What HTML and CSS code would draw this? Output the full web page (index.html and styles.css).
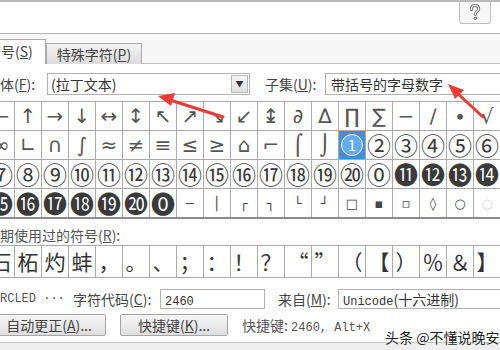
FILE: index.html
```html
<!DOCTYPE html>
<html lang="zh-CN">
<head>
<meta charset="utf-8"/>
<title>符号</title>
<link rel="stylesheet" href="styles.css">
</head>
<body>
<div class="dialog">
  <div class="titlebar">
    <div class="help-btn">
      <svg width="14" height="17" viewBox="0 0 14 17"><path d="M3.4 5.4 C3.4 2.8 5 1.5 7 1.5 C9.2 1.5 10.7 2.8 10.7 4.8 C10.7 6.5 9.5 7.2 8.5 7.9 C7.7 8.5 7.3 9 7.3 10.6" fill="none" stroke="#7a7a7a" stroke-width="3" stroke-linecap="round"/><path d="M3.4 5.4 C3.4 2.8 5 1.5 7 1.5 C9.2 1.5 10.7 2.8 10.7 4.8 C10.7 6.5 9.5 7.2 8.5 7.9 C7.7 8.5 7.3 9 7.3 10.6" fill="none" stroke="#f4f4f4" stroke-width="1.1" stroke-linecap="round"/><circle cx="7.3" cy="14.2" r="1.8" fill="#7a7a7a"/><circle cx="7.3" cy="14.2" r="0.7" fill="#f4f4f4"/></svg>
    </div>
  </div>

  <div class="tabs">
    <div class="tab active">符号(<u>S</u>)</div>
    <div class="tab">特殊字符(<u>P</u>)</div>
  </div>

  <div class="panel">
    <div class="font-row">
      <span class="label font-label">字体(<u>F</u>):</span>
      <div class="field font-field">(拉丁文本)<span class="drop">▼</span></div>
      <span class="label subset-label">子集(<u>U</u>):</span>
      <div class="field subset-field">带括号的字母数字</div>
    </div>

    <div class="grid">
      <div class="cell">←</div><div class="cell">↑</div><div class="cell">→</div><div class="cell">↓</div><div class="cell">↔</div><div class="cell">↕</div><div class="cell">↖</div><div class="cell">↗</div><div class="cell">↘</div><div class="cell">↙</div><div class="cell">↨</div><div class="cell">∂</div><div class="cell">∆</div><div class="cell">∏</div><div class="cell">∑</div><div class="cell">−</div><div class="cell">∕</div><div class="cell">∙</div><div class="cell">√</div>
      <div class="cell">∞</div><div class="cell">∟</div><div class="cell">∩</div><div class="cell">∫</div><div class="cell">≈</div><div class="cell">≠</div><div class="cell">≡</div><div class="cell">≤</div><div class="cell">≥</div><div class="cell">⌂</div><div class="cell">⌐</div><div class="cell">⌠</div><div class="cell">⌡</div><div class="cell sel"><span class="sel-circle">1</span></div><div class="cell circ">②</div><div class="cell circ">③</div><div class="cell circ">④</div><div class="cell circ">⑤</div><div class="cell circ">⑥</div>
      <div class="cell circ">⑦</div><div class="cell circ">⑧</div><div class="cell circ">⑨</div><div class="cell circ">⑩</div><div class="cell circ">⑪</div><div class="cell circ">⑫</div><div class="cell circ">⑬</div><div class="cell circ">⑭</div><div class="cell circ">⑮</div><div class="cell circ">⑯</div><div class="cell circ">⑰</div><div class="cell circ">⑱</div><div class="cell circ">⑲</div><div class="cell circ">⑳</div><div class="cell circ">⓪</div><div class="cell circ">⓫</div><div class="cell circ">⓬</div><div class="cell circ">⓭</div><div class="cell circ">⓮</div>
      <div class="cell circ">⓯</div><div class="cell circ">⓰</div><div class="cell circ">⓱</div><div class="cell circ">⓲</div><div class="cell circ">⓳</div><div class="cell circ">⓴</div><div class="cell circ">⓿</div><div class="cell small">─</div><div class="cell small">│</div><div class="cell small">┌</div><div class="cell small">┐</div><div class="cell small">└</div><div class="cell small">┘</div><div class="cell small">□</div><div class="cell small">▪</div><div class="cell small">▫</div><div class="cell small">◊</div><div class="cell small">○</div><div class="cell small faint">○</div>
    </div>

    <div class="recent-label">近期使用过的符号(<u>R</u>):</div>
    <div class="recent">
      <div class="cell">石</div><div class="cell">柘</div><div class="cell">灼</div><div class="cell">蚌</div><div class="cell">，</div><div class="cell">。</div><div class="cell">、</div><div class="cell">；</div><div class="cell">：</div><div class="cell">！</div><div class="cell">？</div><div class="cell">“</div><div class="cell">”</div><div class="cell">（</div><div class="cell">【</div><div class="cell">）</div><div class="cell">％</div><div class="cell">＆</div><div class="cell">】</div>
    </div>

    <div class="code-row">
      <span class="mono name">RCLED ···</span>
      <span class="label code-label">字符代码(<u>C</u>):</span>
      <div class="field code-field"><span class="mono">2460</span></div>
      <span class="label from-label">来自(<u>M</u>):</span>
      <div class="field from-field"><span class="mono">Unicode</span>(十六进制)</div>
    </div>

    <div class="btn-row">
      <div class="btn btn-auto">自动更正(<u>A</u>)...</div>
      <div class="btn btn-key">快捷键(<u>K</u>)...</div>
      <span class="label shortcut">快捷键: <span class="mono">2460, Alt+X</span></span>
    </div>
  </div>

  <div class="bottom"></div>

  <!-- red annotation arrows -->
  <svg class="arrows" width="500" height="350" viewBox="0 0 500 350">
    <line x1="223" y1="117" x2="170" y2="100" stroke="#ee3b36" stroke-width="3" stroke-linecap="round"/>
    <polygon points="158,96 175,93 171,106" fill="#ee3b36"/>
    <line x1="483" y1="117" x2="456" y2="92" stroke="#ee3b36" stroke-width="3" stroke-linecap="round"/>
    <polygon points="448,84 464,90 455,99" fill="#ee3b36"/>
  </svg>

  <div class="watermark">头条 @不懂说晚安</div>
</div>
</body>
</html>
```
FILE: styles.css
```css
* {
    margin: 0;
    padding: 0;
    box-sizing: border-box;
}

body {
    width: 500px;
    height: 350px;
    overflow: hidden;
    background: #fff;
    font-family: "Noto Sans CJK SC", sans-serif;
    font-size: 14px;
    color: #444;
}

u {
    text-decoration: underline;
    text-underline-offset: 1px;
}

.mono {
    font-family: "Liberation Mono", monospace;
    font-size: 12px;
}

.dialog {
    position: relative;
    height: 350px;
    border-top: 2px solid #b9b9b9;
    overflow: hidden;
}

.titlebar {
    height: 32px;
    border-bottom: 1px solid #b4b4b4;
    display: flex;
    justify-content: flex-end;
}

.help-btn {
    width: 32px;
    height: 22px;
    margin-right: 9px;
    border: 1px solid #bdbdbd;
    border-top: none;
    border-radius: 0 0 4px 4px;
    background: #f6f6f6;
    display: flex;
    align-items: center;
    justify-content: center;
}

.tabs {
    height: 30px;
    display: flex;
    align-items: flex-end;
    background: #f7f7f7;
    border-bottom: 1px solid #c4c4c4;
}

.tab {
    height: 21px;
    padding: 0 10px;
    margin-bottom: -1px;
    border: 1px solid #ababab;
    border-bottom: none;
    background: linear-gradient(#f3f3f3, #dcdcdc);
    line-height: 20px;
    white-space: nowrap;
}

.tab.active {
    height: 25px;
    margin-left: -26px;
    padding: 0 12px;
    background: #fff;
    line-height: 23px;
}

.panel {
    padding-top: 9px;
}

.label {
    white-space: nowrap;
}

.font-row {
    display: flex;
    align-items: center;
    height: 22px;
    margin-left: -14px;
}

.font-label {
    width: 61px;
}

.field {
    height: 22px;
    border: 1px solid #b3b3b3;
    background: #fff;
    padding-left: 3px;
    line-height: 20px;
    white-space: nowrap;
    color: #333;
}

.font-field {
    position: relative;
    width: 203px;
}

.drop {
    position: absolute;
    right: 1px;
    top: 1px;
    width: 17px;
    height: 18px;
    border: 1px solid #b8b8b8;
    background: linear-gradient(#f5f5f5, #e0e0e0);
    font-size: 8px;
    line-height: 16px;
    text-align: center;
    color: #333;
}

.subset-label {
    width: 75px;
    padding-left: 15px;
}

.subset-field {
    flex: 1;
    margin-right: -20px;
    padding-left: 5px;
}

.grid {
    display: grid;
    grid-template-columns: repeat(19, 27px);
    grid-auto-rows: 29px;
    margin: 6px 0 0 -12px;
    border-bottom: 2px solid #8c8c8c;
    font-family: "DejaVu Sans", "Noto Sans CJK SC", sans-serif;
    font-size: 20px;
    color: #555;
}

.cell {
    display: flex;
    align-items: center;
    justify-content: center;
    border-top: 1px solid #ababab;
    border-right: 1px solid #ababab;
    overflow: hidden;
    white-space: nowrap;
    line-height: 1;
}

.cell.circ {
    font-family: "Noto Sans CJK SC", sans-serif;
    font-size: 24px;
    color: #3a3a3a;
}

.cell.small {
    font-size: 13px;
    color: #444;
}

.cell.sel {
    background: #3f8fe2;
}

.sel-circle {
    width: 22px;
    height: 22px;
    border: 1.5px solid #fff;
    border-radius: 50%;
    background: #60acf3;
    color: #fff;
    font-family: "Noto Sans CJK SC", sans-serif;
    font-size: 15px;
    line-height: 19px;
    text-align: center;
}

.cell.faint {
    color: #d6d6d6;
}

.recent-label {
    margin: 7px 0 0 -14px;
    height: 19px;
    line-height: 19px;
    color: #555;
}

.recent {
    display: grid;
    grid-template-columns: repeat(19, 27px);
    grid-auto-rows: 32px;
    margin: 0 0 0 -12px;
    border-bottom: 1px solid #ababab;
    font-size: 21px;
    color: #333;
}

.code-row {
    display: flex;
    align-items: center;
    height: 20px;
    margin-top: 11px;
}

.name {
    width: 73px;
    color: #555;
}

.code-label {
    width: 87px;
}

.code-field {
    width: 105px;
    height: 20px;
    line-height: 18px;
    padding-left: 4px;
}

.from-label {
    margin-left: 13px;
    width: 60px;
}

.from-field {
    flex: 1;
    height: 20px;
    line-height: 18px;
    padding-left: 4px;
    margin-right: -10px;
}

.btn-row {
    display: flex;
    align-items: center;
    height: 22px;
    margin-top: 5px;
    gap: 14px;
}

.btn {
    height: 22px;
    border: 1px solid #a6a6a6;
    border-radius: 2px;
    background: linear-gradient(#f6f6f6, #dedede);
    text-align: center;
    line-height: 20px;
    white-space: nowrap;
    color: #444;
}

.btn-auto {
    width: 116px;
    margin-left: -10px;
    padding-left: 2px;
}

.btn-key {
    width: 108px;
}

.shortcut {
    color: #555;
}

.bottom {
    position: absolute;
    left: 0;
    right: 0;
    bottom: 0;
    height: 8px;
    border-top: 1px solid #c2c2c2;
    background: #eeeeee;
}

.arrows {
    position: absolute;
    left: 0;
    top: -2px;
    pointer-events: none;
}

.watermark {
    position: absolute;
    left: 385px;
    top: 325px;
    font-size: 14px;
    color: #222;
    text-shadow: 0 0 2px #fff, 0 0 2px #fff;
    white-space: nowrap;
}
```
